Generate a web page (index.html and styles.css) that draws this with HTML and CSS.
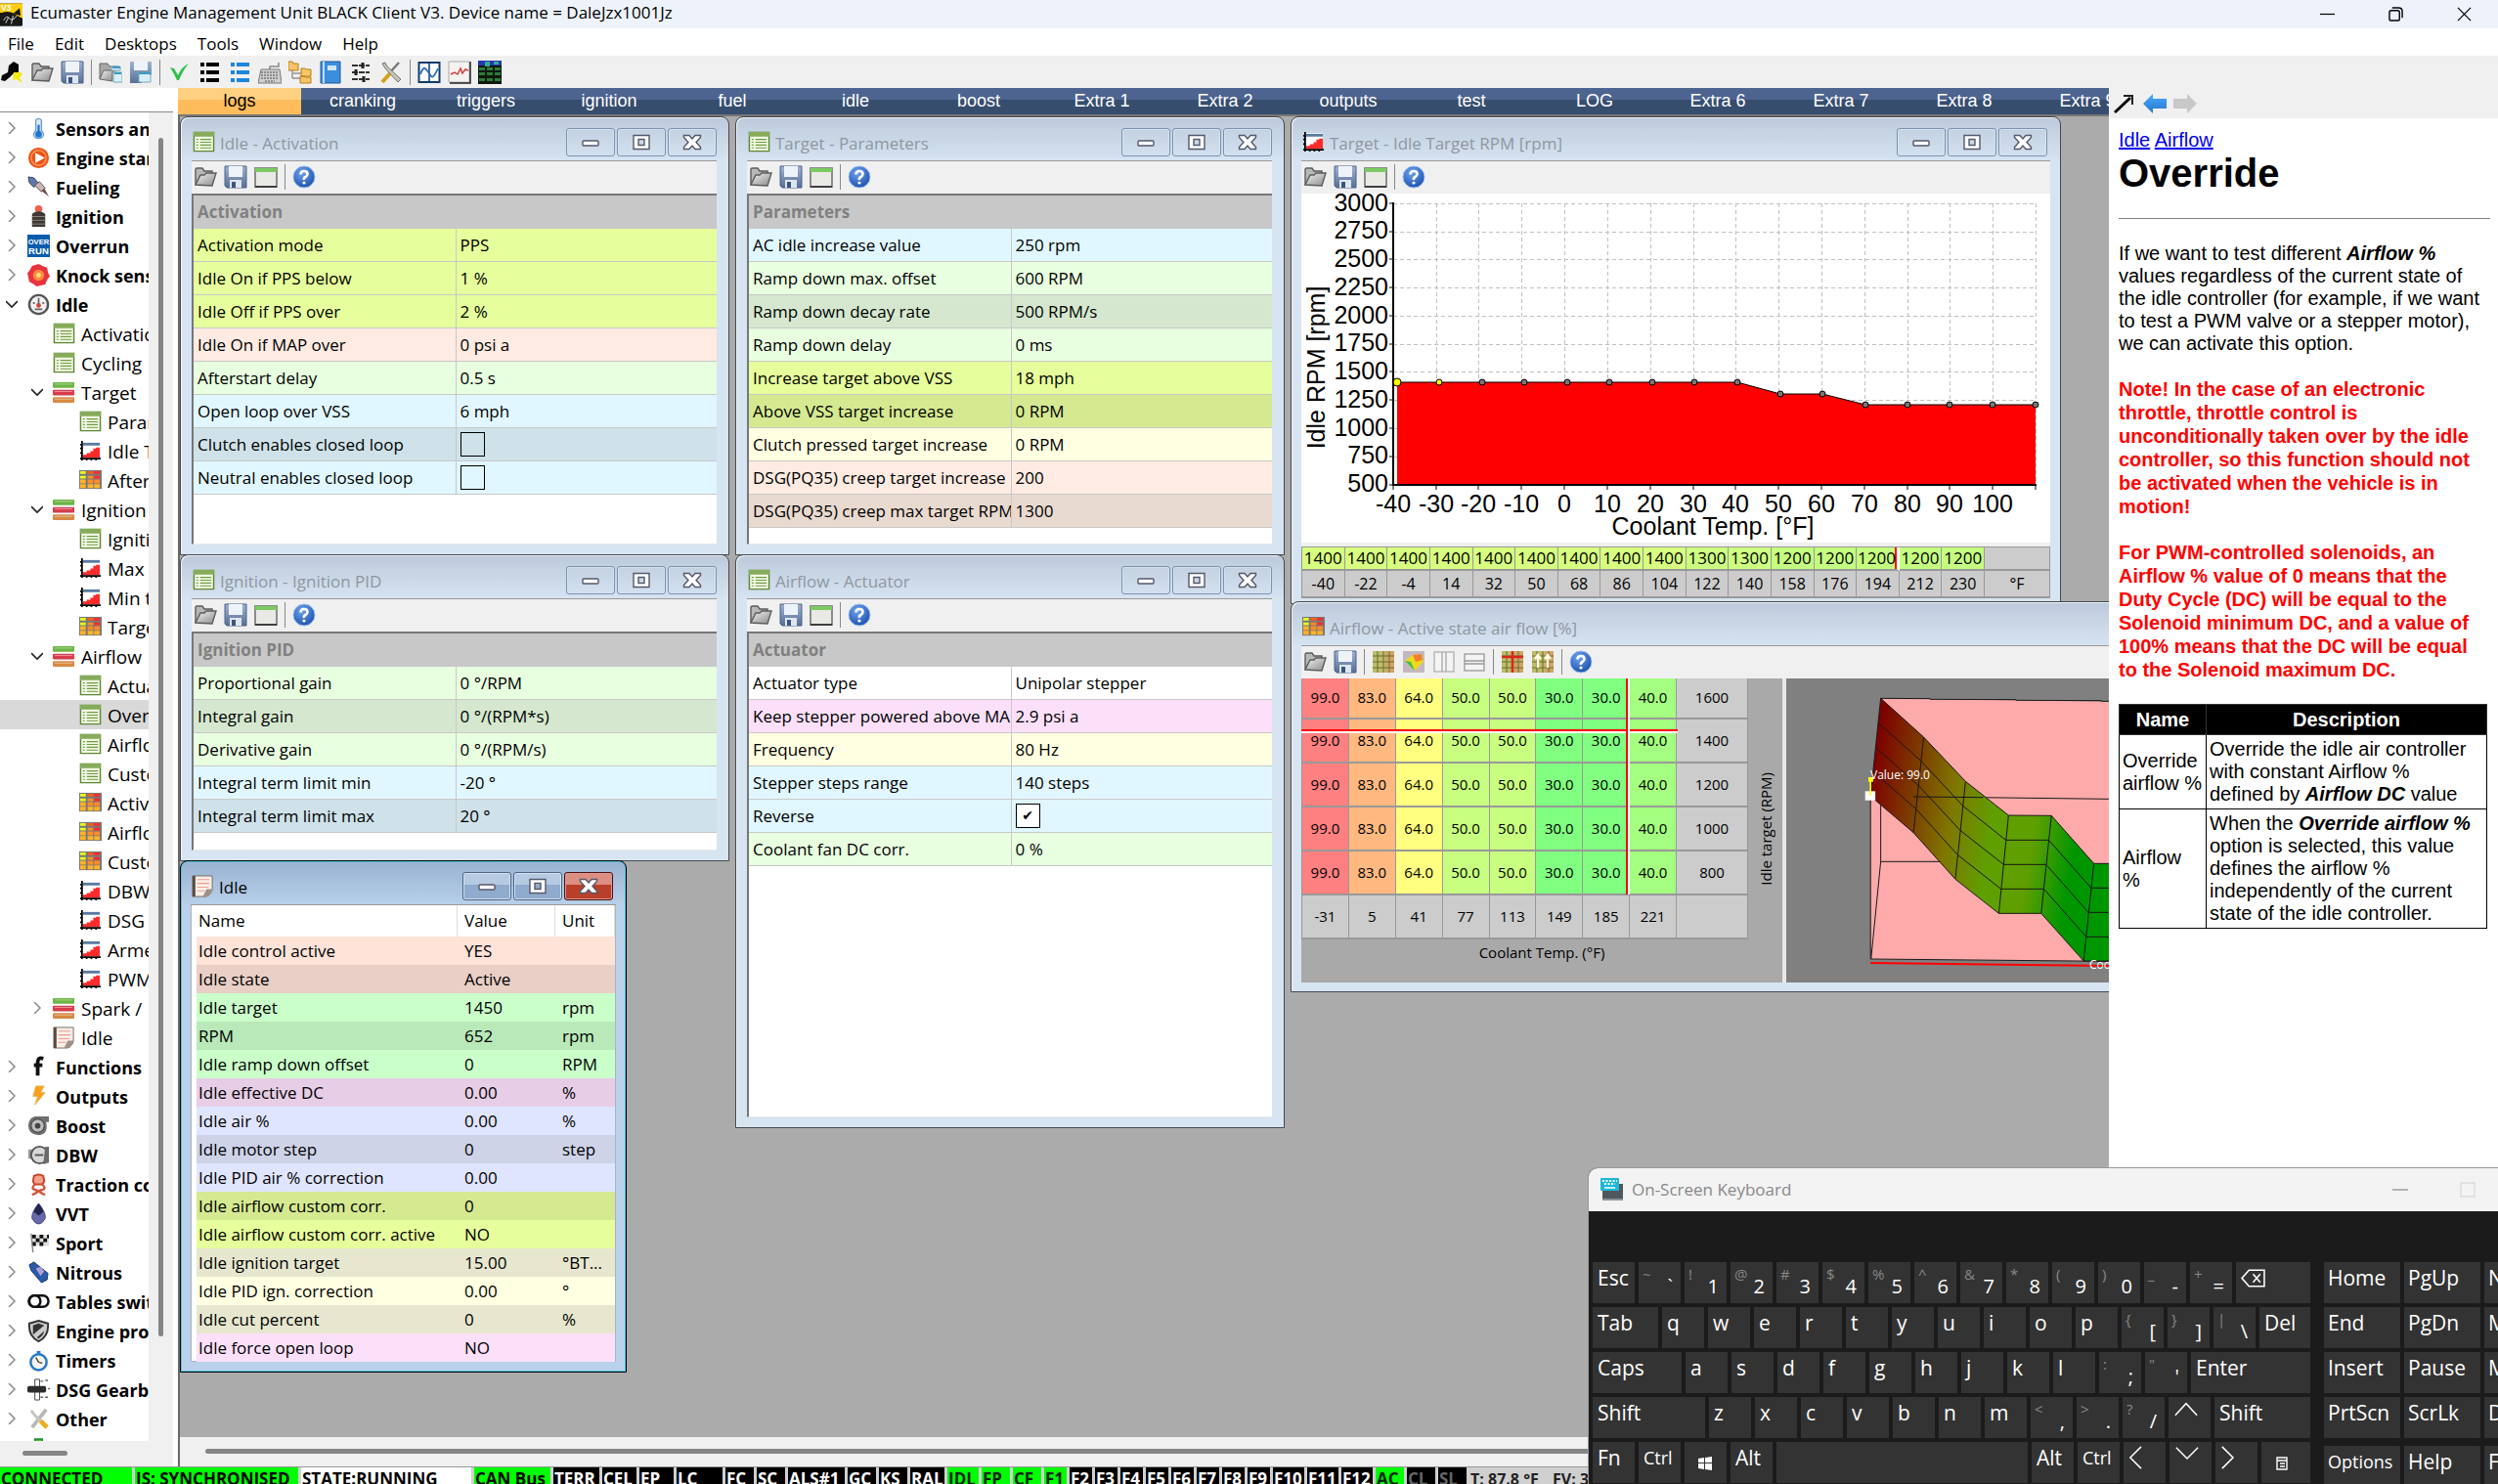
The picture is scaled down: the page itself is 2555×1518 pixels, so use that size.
FILE: index.html
```html
<!DOCTYPE html>
<html lang="en">
<head>
<meta charset="utf-8">
<title>Ecumaster Engine Management Unit BLACK Client V3</title>
<link rel="stylesheet" href="styles.css">
</head>
<body>
<svg class="defs" aria-hidden="true">
  <defs>
    <linearGradient id="g-metal" x1="0" y1="0" x2="1" y2="1"><stop offset="0" stop-color="#f4f4f4"/><stop offset="1" stop-color="#8a8a8a"/></linearGradient>
    <linearGradient id="g-save" x1="0" y1="0" x2="0" y2="1"><stop offset="0" stop-color="#9fb2d0"/><stop offset="1" stop-color="#586f98"/></linearGradient>
    <radialGradient id="g-help" cx=".4" cy=".3" r=".8"><stop offset="0" stop-color="#6fa4ee"/><stop offset="1" stop-color="#1448a8"/></radialGradient>
    <linearGradient id="g-surface" gradientUnits="userSpaceOnUse" x1="1110" y1="460" x2="1507" y2="500"><stop offset="0" stop-color="#7d0000"/><stop offset=".2" stop-color="#7c3a00"/><stop offset=".4" stop-color="#7f7700"/><stop offset=".6" stop-color="#5f9f00"/><stop offset=".8" stop-color="#5f9f00"/><stop offset="1" stop-color="#009600"/></linearGradient>
    <linearGradient id="g-back" x1="0" y1="0" x2="0" y2="1"><stop offset="0" stop-color="#4aa8ff"/><stop offset="1" stop-color="#2478cc"/></linearGradient>
  </defs>
  <symbol id="i-folder" viewBox="0 0 24 24"><path d="M2 20V4l1-1h6l2 3h8v4" fill="#b8b8b8" stroke="#5c5c5c" stroke-width="1.4"/><path d="M2 20L7 10h4l2-2h10l-4 13z" fill="url(#g-metal)" stroke="#5c5c5c" stroke-width="1.4"/></symbol>
  <symbol id="i-save" viewBox="0 0 24 24"><path d="M1 1h22v22H3l-2-2z" fill="url(#g-save)" stroke="#4d628a"/><path d="M5 1h14v11H5z" fill="#eef3fa"/><path d="M6 15h12v8H6z" fill="#dfe6ef"/><path d="M8 17h4v6H8z" fill="#3c5580"/></symbol>
  <symbol id="i-panel" viewBox="0 0 24 24"><path d="M1 3h22v19H1z" fill="#e9e9e6" stroke="#8c8c8c" stroke-width="2"/><path d="M1 3h22v4H1z" fill="#7ccb62"/><path d="M1 22h22" stroke="#3f3f3f" stroke-width="2"/></symbol>
  <symbol id="i-help" viewBox="0 0 24 24"><circle cx="12" cy="12" r="11" fill="url(#g-help)" stroke="#9bbdf0"/><path d="M8.500 9.500Q8.500 6 12 6t3.500 3q0 2-2 3t-1.500 3" fill="none" stroke="#fff" stroke-width="2.600"/><circle cx="12" cy="18" r="1.600" fill="#fff"/></symbol>
  <symbol id="i-list" viewBox="0 0 24 24"><path d="M1.500 1.500h21v20h-21z" fill="#f2f8e4" stroke="#5f8733" stroke-width="1.500"/><path d="M1 1h22v5H1z" fill="#86ab5a"/><path d="M4 9h2M4 12h2M4 15h2M4 18h2M8 9h12M8 12h12M8 15h12M8 18h12" stroke="#6f9c42" stroke-width="1.300"/></symbol>
  <symbol id="i-chart" viewBox="0 0 24 24"><path d="M4 2h18v18H4z" fill="#fff"/><path d="M4 3h18v3H4z" fill="#5a7aa0"/><path d="M4 19v-3h4v-2h4v-2h3V9h3V8h4v11z" fill="#ff2a2a"/><path d="M3 1v21M1 20h22M1 5h3M1 9h3M1 14h3M8 19v3M13 19v3M18 19v3" stroke="#000" stroke-width="1.800"/></symbol>
  <symbol id="i-table" viewBox="0 0 24 24"><path d="M0 1h24v20H0z" fill="#777"/><path d="M1 2h6v3H1zM1 7h6v3H1z" fill="#e8ff1e"/><path d="M9 2h6v3H9z" fill="#ff5a1e"/><path d="M16 2h6v3h-6zM16 7h6v3h-6z" fill="#ff2a2a"/><path d="M9 7h6v3H9zM9 11h6v4H9zM16 11h6v4h-6z" fill="#ff8c28"/><path d="M1 11h6v4H1zM1 16h6v4H1zM9 16h6v4H9zM16 16h6v4h-6z" fill="#ffb428"/></symbol>
  <symbol id="i-stack" viewBox="0 0 24 24"><rect y="1" width="23" height="6" rx="1" fill="#6cb544"/><rect y="9" width="23" height="6" rx="1" fill="#d63c4c"/><rect y="17" width="23" height="6" rx="1" fill="#d68a44"/><path d="M2 3h19M2 11h19M2 19h19" stroke="#fff" stroke-opacity=".45"/></symbol>
  <symbol id="i-doc" viewBox="0 0 24 24"><path d="M1 1h21v15l-6 7H1z" fill="#f6efe8" stroke="#776b62"/><path d="M1 1h3v22H1z" fill="#5c4a40"/><path d="M12 23l4-8 6 0v3l-4 5z" fill="#9d9187"/><path d="M6 5h13M6 9h13M6 13h12M6 17h8" stroke="#f09a90" stroke-width="1.200"/></symbol>
  <symbol id="i-thermo" viewBox="0 0 24 24"><path d="M9 3q3-3 6 0v11q4 4 1 7-4 3-8 0-3-3 1-7z" fill="#dcebf8" stroke="#6a9dcc" stroke-width="1.400"/><circle cx="12" cy="18" r="3.500" fill="#1f74d0"/><path d="M12 8v9" stroke="#1f74d0" stroke-width="2.400"/></symbol>
  <symbol id="i-play" viewBox="0 0 24 24"><circle cx="12" cy="12" r="11" fill="#ec5314"/><circle cx="12" cy="12" r="8" fill="none" stroke="#ff9a5c" stroke-width="1.500"/><path d="M8.500 6.500l10 5.500-10 5.500z" fill="#fff"/></symbol>
  <symbol id="i-injector" viewBox="0 0 24 24"><path d="M1 1l6 1 5 6-5 4-5-5z" fill="#5f7aa8" stroke="#32425e"/><path d="M8 10l5-4 6 7-4 4z" fill="#cbb6b6" stroke="#6c5656"/><path d="M15 16l3-3 5 9z" fill="#6e4a4a"/></symbol>
  <symbol id="i-spark" viewBox="0 0 24 24"><circle cx="12" cy="4" r="4" fill="#f0604c"/><path d="M5 9q7-5 14 0v14H5z" fill="#3d3833"/><path d="M5 12h14M5 16h14M5 20h14" stroke="#8c857c"/></symbol>
  <symbol id="i-overrun" viewBox="0 0 24 24"><path d="M0 0h24v24H0z" fill="#0a5cad"/><text x="12" y="10" text-anchor="middle" font-family="Liberation Sans" font-size="8" font-weight="700" fill="#fff">OVER</text><text x="12" y="21" text-anchor="middle" font-family="Liberation Sans" font-size="10" font-weight="700" fill="#fff">RUN</text></symbol>
  <symbol id="i-knock" viewBox="0 0 24 24"><path d="M12 0l4 2 5 2 1 5 2 4-3 4-2 5-5 1-4 1-4-3-4-2-1-5-1-4 3-4 2-4z" fill="#e8323c"/><circle cx="12" cy="12" r="6" fill="#ff8a3c"/><circle cx="12" cy="12" r="2.500" fill="#ffe08a"/></symbol>
  <symbol id="i-gauge" viewBox="0 0 24 24"><circle cx="12" cy="12" r="10" fill="#f2f2f2" stroke="#555" stroke-width="2.500"/><path d="M12 5v8M8 17h8M6 10l2 1M18 10l-2 1" stroke="#666" stroke-width="1.800"/><circle cx="12" cy="13" r="2.500" fill="#c44"/></symbol>
  <symbol id="i-func" viewBox="0 0 24 24"><path d="M17 3q-6-2-6 4v14M7 10h9" fill="none" stroke="#111" stroke-width="4"/></symbol>
  <symbol id="i-bolt" viewBox="0 0 24 24"><path d="M9 1h9l-4 7h5L8 21l3-9H6z" fill="#f8a01c" stroke="#e8b860"/></symbol>
  <symbol id="i-turbo" viewBox="0 0 24 24"><path d="M8 2h15v6h-3q3 14-9 14Q1 21 1 12 1 4 8 2z" fill="#6f6f6f"/><circle cx="11" cy="12" r="7" fill="#bdbdbd" stroke="#333"/><circle cx="11" cy="12" r="3" fill="#444"/></symbol>
  <symbol id="i-dbw" viewBox="0 0 24 24"><path d="M1 6h4v10H1z" fill="#9a9a9a"/><circle cx="13" cy="12" r="9" fill="#d8d8d8" stroke="#555" stroke-width="2"/><path d="M19 3h4v17l-6 2z" fill="#6a6a6a"/><path d="M8 12h9" stroke="#555" stroke-width="2"/></symbol>
  <symbol id="i-traction" viewBox="0 0 24 24"><path d="M6 9l1-6q5-3 10 0l1 6-2 3H8z" fill="#f5a088" stroke="#c8442a" stroke-width="2"/><path d="M8 12q-5 5 1 6t-4 5M16 12q5 5-1 6t4 5" fill="none" stroke="#d4533a" stroke-width="2.500"/></symbol>
  <symbol id="i-drop" viewBox="0 0 24 24"><path d="M12 1q8 10 7 16-3 6-7 6t-7-6q-1-6 7-16z" fill="#6668a8" stroke="#44467c"/><path d="M12 1q4 5 5 9l-5 4-5-4q1-4 5-9z" fill="#22244a"/></symbol>
  <symbol id="i-flag" viewBox="0 0 24 24"><path d="M5 3h18v12H5z" fill="#ddd"/><path d="M5 3h4v4H5zM13 3h4v4h-4zM9 7h4v4H9zM17 7h4v4h-4zM5 11h4v4H5zM13 11h4v4h-4zM21 3h2v4h-2z" fill="#111"/><path d="M4 2l2 20" stroke="#888" stroke-width="1.500"/></symbol>
  <symbol id="i-nitrous" viewBox="0 0 24 24"><path d="M2 4l5-3 15 12-1 7-6 3L4 10z" fill="#2a5aa8" stroke="#163a70"/><path d="M9 8l5-2 4 5-4 5z" fill="#b0a0d8"/></symbol>
  <symbol id="i-switch" viewBox="0 0 24 24"><rect x="1.500" y="5.500" width="21" height="12" rx="6" fill="#fff" stroke="#111" stroke-width="2.600"/><circle cx="8" cy="11.500" r="6" fill="#fff" stroke="#111" stroke-width="2.600"/></symbol>
  <symbol id="i-shield" viewBox="0 0 24 24"><path d="M12 1l10 3q1 14-10 19Q1 18 2 4z" fill="#ccc" stroke="#333" stroke-width="2"/><path d="M6 6l6-2 6 2-12 10zM10 19l8-7q-1 5-6 8z" fill="#333"/></symbol>
  <symbol id="i-timer" viewBox="0 0 24 24"><circle cx="12" cy="14" r="8.500" fill="#f6f6ee" stroke="#2878c8" stroke-width="2.600"/><path d="M10 2h4v3h-4z" fill="#2878c8"/><path d="M12 14l-3-5M12 14l4 1" stroke="#444" stroke-width="1.500"/></symbol>
  <symbol id="i-gear" viewBox="0 0 24 24"><path d="M8 1h5v22H8z" fill="#fff" stroke="#444"/><rect y="8" width="20" height="7" rx="2" fill="#2c2c2c"/><path d="M14 3h3M14 20h3M19 2h3M19 20h3M22 11h2" stroke="#666" stroke-width="1.500"/></symbol>
  <symbol id="i-tools" viewBox="0 0 24 24"><path d="M20 2l-9 10" stroke="#777" stroke-width="2.400"/><path d="M11 13l-8 9" stroke="#d8a018" stroke-width="4"/><path d="M3 3l3 5 13 14 3-3L8 6 6 2z" fill="#c4c4bc" stroke="#77776e"/></symbol>
  <symbol id="i-other" viewBox="0 0 24 24"><path d="M20 2L5 21" stroke="#b8b8b4" stroke-width="4"/><path d="M4 3l4 5 6 6" stroke="#c4c4c0" stroke-width="3" fill="none"/><path d="M14 14l7 7" stroke="#f0ac1c" stroke-width="5"/></symbol>
  <symbol id="i-plus" viewBox="0 0 24 24"><path d="M8 2h8v6h6v8h-6v6H8v-6H2V8h6z" fill="#5cb832" stroke="#1a8a3c" stroke-width="1.500"/></symbol>
  <symbol id="i-plug" viewBox="0 0 24 24"><path d="M14 1l5 3 0 8-5 1-4 4-5 4-4-1 1-5 6-3 1-7z" fill="#080808"/><path d="M14 12h8v4l-2 1 3 6-6-4-4 1z" fill="#f4ea10"/></symbol>
  <symbol id="i-loadproj" viewBox="0 0 24 24"><path d="M1 19V3h8l2 3h9v4" fill="#a8a8a8" stroke="#666"/><path d="M1 19l4-9h9v11z" fill="url(#g-metal)" stroke="#666"/><path d="M13 6h9v4h-9zM15 12h9v10h-9z" fill="#d8eef8" stroke="#7ab"/><path d="M14 7h8M16 13h7" stroke="#3a9ac8" stroke-width="2"/></symbol>
  <symbol id="i-saveproj" viewBox="0 0 24 24"><path d="M1 1h22v14H13v8H1z" fill="url(#g-save)"/><path d="M5 1h14v9H5z" fill="#eef3fa"/><path d="M10 12h12v10H10z" fill="#d8eef8" stroke="#7ab"/><path d="M10 13h12" stroke="#3a9ac8" stroke-width="2"/></symbol>
  <symbol id="i-check" viewBox="0 0 24 24"><path d="M3 7l4 1 4 7q4-9 11-12-6 7-10 17H10Q7 13 3 7z" fill="#2fc04a"/></symbol>
  <symbol id="i-bullets" viewBox="0 0 24 24"><g stroke="currentColor" stroke-width="4"><path d="M3 4h4M9 4h13M3 12h4M9 12h13M3 20h4M9 20h13"/></g></symbol>
  <symbol id="i-keys" viewBox="0 0 24 24"><path d="M12 9V6h9V2" fill="none" stroke="#888" stroke-width="1.500"/><path d="M3 9h19l2 14H0z" fill="#d0d0d0" stroke="#777"/><path d="M3 12h18M3 15h18M3 18h18M7 21h10" stroke="#777" stroke-width="1.600" stroke-dasharray="2 1"/></symbol>
  <symbol id="i-tree" viewBox="0 0 24 24"><path d="M4 9v9h9M5 13h8" stroke="#666" fill="none"/><path d="M0 1h4l1 2h5v7H0zM13 8h4l1 1h5v7H13zM12 16h4l1 1h6v6H12z" fill="#f8c468" stroke="#b87c1c"/></symbol>
  <symbol id="i-book" viewBox="0 0 24 24"><path d="M2 1h20v22H2z" fill="#3c8edc" stroke="#1c5a9c"/><path d="M5 1v22" stroke="#bcdcf8" stroke-width="2"/><path d="M9 5h9v5H9z" fill="#cfe6fb"/></symbol>
  <symbol id="i-sliders" viewBox="0 0 24 24"><path d="M3 5h18M3 12h18M3 19h18" stroke="#333" stroke-width="2" stroke-dasharray="6 1"/><path d="M14 2v6M7 9v6M15 16v6" stroke="#222" stroke-width="3"/></symbol>
  <symbol id="i-scope" viewBox="0 0 24 24"><path d="M1.500 2h21v20h-21z" fill="#fff" stroke="#123a6c" stroke-width="2"/><path d="M12 2v20" stroke="#123a6c" stroke-width="1.500"/><path d="M3 14q3-9 6-5t5 7 7-8" fill="none" stroke="#2a6cc0" stroke-width="1.800"/></symbol>
  <symbol id="i-log" viewBox="0 0 24 24"><path d="M1 1h21v21H1z" fill="#f6f2f2" stroke="#aaa"/><path d="M23 1v22H2" stroke="#222" stroke-width="1.500" fill="none"/><path d="M3 14l4-2 3 2 3-6 2 5 3-4 3 1" stroke="#d83c3c" stroke-width="1.500" fill="none"/></symbol>
  <symbol id="i-matrix" viewBox="0 0 24 24"><path d="M0 0h24v24H0z" fill="#101810"/><path d="M0 0h24v5H0z" fill="#2438b0"/><path d="M7 1h5v5H7zM16 1h5v3h-5z" fill="#30b090"/><path d="M1 7h6v3H1zM9 7h6v3H9zM17 7h6v3h-6zM1 12h6v3H1zM9 12h6v3H9zM17 12h6v3h-6zM1 18h6v3H1zM9 18h6v3H9zM17 18h6v3h-6z" fill="#2c7c38"/></symbol>
  <symbol id="i-map" viewBox="0 0 24 24"><path d="M1 1h22v22H1z" fill="#bcbc6c"/><path d="M14 1h9v22h-9z" fill="#cfa468"/><path d="M1 6h22M1 12h22M1 18h22M6 1v22M12 1v22M18 1v22" stroke="#6c6c2c"/></symbol>
  <symbol id="i-mapcross" viewBox="0 0 24 24"><use href="#i-map"/><path d="M1 7h22M12 1v22" stroke="#d8281c" stroke-width="2.600"/></symbol>
  <symbol id="i-maparrows" viewBox="0 0 24 24"><use href="#i-map"/><path d="M7 18V6M4 9l3-4 3 4M17 18V6M14 9l3-4 3 4" stroke="#fffbe0" stroke-width="2.400" fill="none"/></symbol>
  <symbol id="i-surface" viewBox="0 0 24 24"><path d="M1 1h22v22H1z" fill="#c4b8c0"/><path d="M3 11l8-6 9-1 2 8-9 9z" fill="#f0d81c"/><path d="M11 5l9-1 1 6-7 2z" fill="#f0802c"/><path d="M3 11l6 1 4 9z" fill="#38c048"/></symbol>
  <symbol id="i-cols" viewBox="0 0 24 24"><path d="M2 2h20v20H2z" fill="#f4f4f4" stroke="#b8b8b8" stroke-width="1.500"/><path d="M10 2v20M14 2v20" stroke="#b0b0b0" stroke-width="1.500"/></symbol>
  <symbol id="i-rows" viewBox="0 0 24 24"><path d="M2 4h20v17H2z" fill="#f4f4f4" stroke="#a4a4a4" stroke-width="1.500"/><path d="M2 11h20M2 14h20" stroke="#999" stroke-width="1.500"/></symbol>
  <symbol id="i-min" viewBox="0 0 24 24"><rect x="4" y="10" width="16" height="5" rx="1" fill="#fff" stroke="#55586a" stroke-width="1.400"/></symbol>
  <symbol id="i-max" viewBox="0 0 24 24"><path fill-rule="evenodd" d="M4 4.500h16v14H4zM9 8.500v6h6v-6z" fill="#fff" stroke="#55586a" stroke-width="1.400"/></symbol>
  <symbol id="i-close" viewBox="0 0 24 24"><path d="M3.500 4.500h5.500l3 3.500 3-3.500h5.500v2L16 11.500l4.500 5v2H15l-3-3.500-3 3.500H3.500v-2l4.500-5-4.500-5z" fill="#fff" stroke="#55586a" stroke-width="1.400"/></symbol>
  <symbol id="i-right" viewBox="0 0 12 12"><path d="M3 0l6 6-6 6" fill="none" stroke="#8c8c8c" stroke-width="1.500"/></symbol>
  <symbol id="i-down" viewBox="0 0 12 12"><path d="M0 3l6 6 6-6" fill="none" stroke="#222" stroke-width="1.600"/></symbol>
</svg>

<header class="titlebar">
  <svg class="app-icon" viewBox="0 0 24 24" aria-hidden="true"><path d="M0 0h24v24H0z" fill="#111"/><path d="M0 0h24v16L12 10H0z" fill="#ffcc10"/><path d="M0 11q12-6 22 6v7H0z" fill="#181818"/><path d="M14 11l7-6 1 8z" fill="#181818"/><path d="M4 18q3-6 6-2t8-3M6 21l3-6M12 22l2-9" stroke="#ddd" fill="none"/><text x="1" y="8" font-family="Liberation Sans" font-size="9" font-weight="700" fill="#fff">V3</text></svg>
  <h1 class="app-title">Ecumaster Engine Management Unit BLACK Client V3. Device name = DaleJzx1001Jz</h1>
  <div class="sys-buttons">
    <button aria-label="Minimize"><svg viewBox="0 0 16 16"><path d="M0 8h16" stroke="#000" stroke-width="1.300"/></svg></button>
    <button aria-label="Restore"><svg viewBox="0 0 16 16" fill="none" stroke="#000" stroke-width="1.500"><rect x="1" y="4" width="11" height="11" rx="2"/><path d="M4 1h7q4 0 4 4v7"/></svg></button>
    <button aria-label="Close"><svg viewBox="0 0 16 16"><path d="M1 1l14 14M15 1L1 15" stroke="#000" stroke-width="1.300"/></svg></button>
  </div>
</header>
<nav class="menu"><button>File</button><button>Edit</button><button>Desktops</button><button>Tools</button><button>Window</button><button>Help</button></nav>
<div class="toolbar main-tools">
  <button aria-label="Connect"><svg><use href="#i-plug"/></svg></button>
  <button aria-label="Open"><svg><use href="#i-folder"/></svg></button>
  <button aria-label="Save"><svg><use href="#i-save"/></svg></button>
  <span class="sep"></span>
  <button aria-label="Open project"><svg><use href="#i-loadproj"/></svg></button>
  <button aria-label="Save project"><svg><use href="#i-saveproj"/></svg></button>
  <span class="sep"></span>
  <button aria-label="Make permanent"><svg><use href="#i-check"/></svg></button>
  <button aria-label="List"><svg><use href="#i-bullets"/></svg></button>
  <button aria-label="Channels" class="blue"><svg><use href="#i-bullets"/></svg></button>
  <button aria-label="Shortcuts"><svg><use href="#i-keys"/></svg></button>
  <button aria-label="Tree"><svg><use href="#i-tree"/></svg></button>
  <button aria-label="Manual"><svg><use href="#i-book"/></svg></button>
  <button aria-label="Options"><svg><use href="#i-sliders"/></svg></button>
  <button aria-label="Tools"><svg><use href="#i-tools"/></svg></button>
  <span class="sep"></span>
  <button aria-label="Scope"><svg><use href="#i-scope"/></svg></button>
  <button aria-label="Log"><svg><use href="#i-log"/></svg></button>
  <button aria-label="Parameters"><svg><use href="#i-matrix"/></svg></button>
</div>

<main class="workspace">
  <aside class="sidebar">
    <input class="search" type="text" aria-label="Filter">
    <div class="tree-area">
      <ul class="tree">
        <li class="top"><svg class="chev"><use href="#i-right"/></svg><svg><use href="#i-thermo"/></svg><span>Sensors and</span></li>
        <li class="top"><svg class="chev"><use href="#i-right"/></svg><svg><use href="#i-play"/></svg><span>Engine start</span></li>
        <li class="top"><svg class="chev"><use href="#i-right"/></svg><svg><use href="#i-injector"/></svg><span>Fueling</span></li>
        <li class="top"><svg class="chev"><use href="#i-right"/></svg><svg><use href="#i-spark"/></svg><span>Ignition</span></li>
        <li class="top"><svg class="chev"><use href="#i-right"/></svg><svg><use href="#i-overrun"/></svg><span>Overrun</span></li>
        <li class="top"><svg class="chev"><use href="#i-right"/></svg><svg><use href="#i-knock"/></svg><span>Knock sensor</span></li>
        <li class="top"><svg class="chev"><use href="#i-down"/></svg><svg><use href="#i-gauge"/></svg><span>Idle</span></li>
        <li class="leaf1"><svg><use href="#i-list"/></svg><span>Activation</span></li>
        <li class="leaf1"><svg><use href="#i-list"/></svg><span>Cycling</span></li>
        <li class="group"><svg class="chev"><use href="#i-down"/></svg><svg><use href="#i-stack"/></svg><span>Target</span></li>
        <li class="leaf2"><svg><use href="#i-list"/></svg><span>Parameters</span></li>
        <li class="leaf2"><svg><use href="#i-chart"/></svg><span>Idle Target</span></li>
        <li class="leaf2"><svg><use href="#i-table"/></svg><span>Afterstart</span></li>
        <li class="group"><svg class="chev"><use href="#i-down"/></svg><svg><use href="#i-stack"/></svg><span>Ignition</span></li>
        <li class="leaf2"><svg><use href="#i-list"/></svg><span>Ignition PID</span></li>
        <li class="leaf2"><svg><use href="#i-chart"/></svg><span>Max ign</span></li>
        <li class="leaf2"><svg><use href="#i-chart"/></svg><span>Min table</span></li>
        <li class="leaf2"><svg><use href="#i-table"/></svg><span>Target ign</span></li>
        <li class="group"><svg class="chev"><use href="#i-down"/></svg><svg><use href="#i-stack"/></svg><span>Airflow</span></li>
        <li class="leaf2"><svg><use href="#i-list"/></svg><span>Actuator</span></li>
        <li class="leaf2 selected"><svg><use href="#i-list"/></svg><span>Override</span></li>
        <li class="leaf2"><svg><use href="#i-list"/></svg><span>Airflow PID</span></li>
        <li class="leaf2"><svg><use href="#i-list"/></svg><span>Custom</span></li>
        <li class="leaf2"><svg><use href="#i-table"/></svg><span>Active state</span></li>
        <li class="leaf2"><svg><use href="#i-table"/></svg><span>Airflow</span></li>
        <li class="leaf2"><svg><use href="#i-table"/></svg><span>Custom</span></li>
        <li class="leaf2"><svg><use href="#i-chart"/></svg><span>DBW</span></li>
        <li class="leaf2"><svg><use href="#i-chart"/></svg><span>DSG</span></li>
        <li class="leaf2"><svg><use href="#i-chart"/></svg><span>Armed</span></li>
        <li class="leaf2"><svg><use href="#i-chart"/></svg><span>PWM</span></li>
        <li class="group"><svg class="chev"><use href="#i-right"/></svg><svg><use href="#i-stack"/></svg><span>Spark /</span></li>
        <li class="leaf1"><svg><use href="#i-doc"/></svg><span>Idle</span></li>
        <li class="top"><svg class="chev"><use href="#i-right"/></svg><svg><use href="#i-func"/></svg><span>Functions</span></li>
        <li class="top"><svg class="chev"><use href="#i-right"/></svg><svg><use href="#i-bolt"/></svg><span>Outputs</span></li>
        <li class="top"><svg class="chev"><use href="#i-right"/></svg><svg><use href="#i-turbo"/></svg><span>Boost</span></li>
        <li class="top"><svg class="chev"><use href="#i-right"/></svg><svg><use href="#i-dbw"/></svg><span>DBW</span></li>
        <li class="top"><svg class="chev"><use href="#i-right"/></svg><svg><use href="#i-traction"/></svg><span>Traction control</span></li>
        <li class="top"><svg class="chev"><use href="#i-right"/></svg><svg><use href="#i-drop"/></svg><span>VVT</span></li>
        <li class="top"><svg class="chev"><use href="#i-right"/></svg><svg><use href="#i-flag"/></svg><span>Sport</span></li>
        <li class="top"><svg class="chev"><use href="#i-right"/></svg><svg><use href="#i-nitrous"/></svg><span>Nitrous</span></li>
        <li class="top"><svg class="chev"><use href="#i-right"/></svg><svg><use href="#i-switch"/></svg><span>Tables switch</span></li>
        <li class="top"><svg class="chev"><use href="#i-right"/></svg><svg><use href="#i-shield"/></svg><span>Engine protection</span></li>
        <li class="top"><svg class="chev"><use href="#i-right"/></svg><svg><use href="#i-timer"/></svg><span>Timers</span></li>
        <li class="top"><svg class="chev"><use href="#i-right"/></svg><svg><use href="#i-gear"/></svg><span>DSG Gearbox</span></li>
        <li class="top"><svg class="chev"><use href="#i-right"/></svg><svg><use href="#i-other"/></svg><span>Other</span></li>
        <li class="top"><svg class="chev"></svg><svg><use href="#i-plus"/></svg><span></span></li>
      </ul>
      <div class="vscroll"><i></i></div>
    </div>
    <div class="hscroll"><i></i></div>
  </aside>

  <section class="mdi">
    <nav class="tabs"><button class="active">logs</button><button>cranking</button><button>triggers</button><button>ignition</button><button>fuel</button><button>idle</button><button>boost</button><button>Extra 1</button><button>Extra 2</button><button>outputs</button><button>test</button><button>LOG</button><button>Extra 6</button><button>Extra 7</button><button>Extra 8</button><button>Extra 9</button></nav>
    <div class="canvas">

      <article class="win w-activation">
        <header><svg><use href="#i-list"/></svg><h2>Idle - Activation</h2><div class="caption"><button aria-label="Minimize"><svg><use href="#i-min"/></svg></button><button aria-label="Maximize"><svg><use href="#i-max"/></svg></button><button aria-label="Close"><svg><use href="#i-close"/></svg></button></div></header>
        <div class="toolbar"><button aria-label="Open"><svg><use href="#i-folder"/></svg></button><button aria-label="Save"><svg><use href="#i-save"/></svg></button><button aria-label="Panel"><svg><use href="#i-panel"/></svg></button><span class="sep"></span><button aria-label="Help"><svg><use href="#i-help"/></svg></button></div>
        <div class="sheet"><table class="params">
          <tr><th colspan="2">Activation</th></tr>
          <tr class="lime"><td>Activation mode</td><td>PPS</td></tr>
          <tr class="lime"><td>Idle On if PPS below</td><td>1 %</td></tr>
          <tr class="lime"><td>Idle Off if PPS over</td><td>2 %</td></tr>
          <tr class="peach"><td>Idle On if MAP over</td><td>0 psi a</td></tr>
          <tr class="mint"><td>Afterstart delay</td><td>0.5 s</td></tr>
          <tr class="sky"><td>Open loop over VSS</td><td>6 mph</td></tr>
          <tr class="sky-d"><td><label for="clutch">Clutch enables closed loop</label></td><td><input id="clutch" type="checkbox"></td></tr>
          <tr class="sky"><td><label for="neutral">Neutral enables closed loop</label></td><td><input id="neutral" type="checkbox"></td></tr>
        </table></div>
      </article>

      <article class="win w-params">
        <header><svg><use href="#i-list"/></svg><h2>Target - Parameters</h2><div class="caption"><button aria-label="Minimize"><svg><use href="#i-min"/></svg></button><button aria-label="Maximize"><svg><use href="#i-max"/></svg></button><button aria-label="Close"><svg><use href="#i-close"/></svg></button></div></header>
        <div class="toolbar"><button aria-label="Open"><svg><use href="#i-folder"/></svg></button><button aria-label="Save"><svg><use href="#i-save"/></svg></button><button aria-label="Panel"><svg><use href="#i-panel"/></svg></button><span class="sep"></span><button aria-label="Help"><svg><use href="#i-help"/></svg></button></div>
        <div class="sheet"><table class="params">
          <tr><th colspan="2">Parameters</th></tr>
          <tr class="sky"><td>AC idle increase value</td><td>250 rpm</td></tr>
          <tr class="mint"><td>Ramp down max. offset</td><td>600 RPM</td></tr>
          <tr class="mint-d"><td>Ramp down decay rate</td><td>500 RPM/s</td></tr>
          <tr class="mint"><td>Ramp down delay</td><td>0 ms</td></tr>
          <tr class="lime"><td>Increase target above VSS</td><td>18 mph</td></tr>
          <tr class="lime-d"><td>Above VSS target increase</td><td>0 RPM</td></tr>
          <tr class="cream"><td>Clutch pressed target increase</td><td>0 RPM</td></tr>
          <tr class="peach"><td>DSG(PQ35) creep target increase</td><td>200</td></tr>
          <tr class="peach-d"><td>DSG(PQ35) creep max target RPM</td><td>1300</td></tr>
        </table></div>
      </article>

      <article class="win w-rpm">
        <header><svg><use href="#i-chart"/></svg><h2>Target - Idle Target RPM [rpm]</h2><div class="caption"><button aria-label="Minimize"><svg><use href="#i-min"/></svg></button><button aria-label="Maximize"><svg><use href="#i-max"/></svg></button><button aria-label="Close"><svg><use href="#i-close"/></svg></button></div></header>
        <div class="toolbar"><button aria-label="Open"><svg><use href="#i-folder"/></svg></button><button aria-label="Save"><svg><use href="#i-save"/></svg></button><button aria-label="Panel"><svg><use href="#i-panel"/></svg></button><span class="sep"></span><button aria-label="Help"><svg><use href="#i-help"/></svg></button></div>
        <svg class="chart" viewBox="0 0 766 357">
          <path class="grid" d="M94 10.500H751M94 39.500H751M94 67.500H751M94 96.500H751M94 125.500H751M94 154.500H751M94 182.500H751M94 211.500H751M94 240.500H751M94 269.500H751M138.500 10V298M181.500 10V298M225.500 10V298M269.500 10V298M313.500 10V298M357.500 10V298M401.500 10V298M444.500 10V298M488.500 10V298M532.500 10V298M576.500 10V298M620.500 10V298M663.500 10V298M707.500 10V298M751.500 10V298"/>
          <path class="area" d="M98 298V193H446L490 205H533L577 216H751V298z"/>
          <path class="curve" d="M98 193H446L490 205H533L577 216H751"/>
          <path class="axis" d="M94 9V298H752"/>
          <path class="tick" d="M90 10h4M90 39h4M90 67h4M90 96h4M90 125h4M90 154h4M90 182h4M90 211h4M90 240h4M90 269h4M90 298h4M94 298v5M138 298v5M181 298v5M225 298v5M269 298v5M313 298v5M357 298v5M401 298v5M444 298v5M488 298v5M532 298v5M576 298v5M620 298v5M663 298v5M707 298v5M751 298v5"/>
          <g class="dots"><circle class="hot" cx="98" cy="193" r="4"/><circle class="hot" cx="141" cy="193" r="3"/><circle cx="185" cy="193" r="3"/><circle cx="228" cy="193" r="3"/><circle cx="272" cy="193" r="3"/><circle cx="315" cy="193" r="3"/><circle cx="359" cy="193" r="3"/><circle cx="402" cy="193" r="3"/><circle cx="446" cy="193" r="3"/><circle cx="490" cy="205" r="3"/><circle cx="533" cy="205" r="3"/><circle cx="577" cy="216" r="3"/><circle cx="620" cy="216" r="3"/><circle cx="663" cy="216" r="3"/><circle cx="707" cy="216" r="3"/><circle cx="751" cy="216" r="3"/></g>
          <g class="ylab"><text x="89" y="18">3000</text><text x="89" y="46">2750</text><text x="89" y="75">2500</text><text x="89" y="104">2250</text><text x="89" y="133">2000</text><text x="89" y="161">1750</text><text x="89" y="190">1500</text><text x="89" y="219">1250</text><text x="89" y="248">1000</text><text x="89" y="276">750</text><text x="89" y="305">500</text></g>
          <g class="xlab"><text x="94" y="326">-40</text><text x="138" y="326">-30</text><text x="181" y="326">-20</text><text x="225" y="326">-10</text><text x="269" y="326">0</text><text x="313" y="326">10</text><text x="357" y="326">20</text><text x="401" y="326">30</text><text x="444" y="326">40</text><text x="488" y="326">50</text><text x="532" y="326">60</text><text x="576" y="326">70</text><text x="620" y="326">80</text><text x="663" y="326">90</text><text x="707" y="326">100</text><text x="421" y="349">Coolant Temp. [°F]</text><text transform="translate(24 178) rotate(-90)">Idle RPM [rpm]</text></g>
        </svg>
        <div class="rpm-strip">
          <table>
            <tr class="vals"><td class="a">1400</td><td class="a">1400</td><td class="a">1400</td><td class="a">1400</td><td class="a">1400</td><td class="a">1400</td><td class="a">1400</td><td class="a">1400</td><td class="a">1400</td><td class="b">1300</td><td class="b">1300</td><td class="c">1200</td><td class="c">1200</td><td class="c mark">1200</td><td class="c">1200</td><td class="c">1200</td><td class="unit"></td></tr>
            <tr class="bins"><td>-40</td><td>-22</td><td>-4</td><td>14</td><td>32</td><td>50</td><td>68</td><td>86</td><td>104</td><td>122</td><td>140</td><td>158</td><td>176</td><td>194</td><td>212</td><td>230</td><td>°F</td></tr>
          </table>
        </div>
      </article>

      <article class="win w-pid">
        <header><svg><use href="#i-list"/></svg><h2>Ignition - Ignition PID</h2><div class="caption"><button aria-label="Minimize"><svg><use href="#i-min"/></svg></button><button aria-label="Maximize"><svg><use href="#i-max"/></svg></button><button aria-label="Close"><svg><use href="#i-close"/></svg></button></div></header>
        <div class="toolbar"><button aria-label="Open"><svg><use href="#i-folder"/></svg></button><button aria-label="Save"><svg><use href="#i-save"/></svg></button><button aria-label="Panel"><svg><use href="#i-panel"/></svg></button><span class="sep"></span><button aria-label="Help"><svg><use href="#i-help"/></svg></button></div>
        <div class="sheet"><table class="params">
          <tr><th colspan="2">Ignition PID</th></tr>
          <tr class="mint"><td>Proportional gain</td><td>0 °/RPM</td></tr>
          <tr class="mint-d"><td>Integral gain</td><td>0 °/(RPM*s)</td></tr>
          <tr class="mint"><td>Derivative gain</td><td>0 °/(RPM/s)</td></tr>
          <tr class="sky"><td>Integral term limit min</td><td>-20 °</td></tr>
          <tr class="sky-d"><td>Integral term limit max</td><td>20 °</td></tr>
        </table></div>
      </article>

      <article class="win w-actuator">
        <header><svg><use href="#i-list"/></svg><h2>Airflow - Actuator</h2><div class="caption"><button aria-label="Minimize"><svg><use href="#i-min"/></svg></button><button aria-label="Maximize"><svg><use href="#i-max"/></svg></button><button aria-label="Close"><svg><use href="#i-close"/></svg></button></div></header>
        <div class="toolbar"><button aria-label="Open"><svg><use href="#i-folder"/></svg></button><button aria-label="Save"><svg><use href="#i-save"/></svg></button><button aria-label="Panel"><svg><use href="#i-panel"/></svg></button><span class="sep"></span><button aria-label="Help"><svg><use href="#i-help"/></svg></button></div>
        <div class="sheet"><table class="params">
          <tr><th colspan="2">Actuator</th></tr>
          <tr><td>Actuator type</td><td>Unipolar stepper</td></tr>
          <tr class="pink"><td>Keep stepper powered above MAP</td><td>2.9 psi a</td></tr>
          <tr class="cream"><td>Frequency</td><td>80 Hz</td></tr>
          <tr class="sky"><td>Stepper steps range</td><td>140 steps</td></tr>
          <tr class="sky"><td><label for="reverse">Reverse</label></td><td><input id="reverse" type="checkbox" checked></td></tr>
          <tr class="mint"><td>Coolant fan DC corr.</td><td>0 %</td></tr>
        </table></div>
      </article>

      <article class="win w-airflow">
        <header><svg><use href="#i-table"/></svg><h2>Airflow - Active state air flow [%]</h2></header>
        <div class="toolbar"><button aria-label="Open"><svg><use href="#i-folder"/></svg></button><button aria-label="Save"><svg><use href="#i-save"/></svg></button><span class="sep"></span><button aria-label="Map"><svg><use href="#i-map"/></svg></button><button aria-label="Surface"><svg><use href="#i-surface"/></svg></button><button aria-label="Split columns"><svg><use href="#i-cols"/></svg></button><button aria-label="Split rows"><svg><use href="#i-rows"/></svg></button><span class="sep"></span><button aria-label="Cursor"><svg><use href="#i-mapcross"/></svg></button><button aria-label="Follow"><svg><use href="#i-maparrows"/></svg></button><span class="sep"></span><button aria-label="Help"><svg><use href="#i-help"/></svg></button></div>
        <div class="split">
          <div class="map-pane">
            <div class="map-wrap">
              <table class="map">
                <tr class="first"><td class="r">99.0</td><td class="o">83.0</td><td class="y">64.0</td><td class="l">50.0</td><td class="l">50.0</td><td class="g">30.0</td><td class="g">30.0</td><td class="h">40.0</td><th>1600</th></tr>
                <tr><td class="r">99.0</td><td class="o">83.0</td><td class="y">64.0</td><td class="l">50.0</td><td class="l">50.0</td><td class="g">30.0</td><td class="g">30.0</td><td class="h">40.0</td><th>1400</th></tr>
                <tr><td class="r">99.0</td><td class="o">83.0</td><td class="y">64.0</td><td class="l">50.0</td><td class="l">50.0</td><td class="g">30.0</td><td class="g">30.0</td><td class="h">40.0</td><th>1200</th></tr>
                <tr><td class="r">99.0</td><td class="o">83.0</td><td class="y">64.0</td><td class="l">50.0</td><td class="l">50.0</td><td class="g">30.0</td><td class="g">30.0</td><td class="h">40.0</td><th>1000</th></tr>
                <tr><td class="r">99.0</td><td class="o">83.0</td><td class="y">64.0</td><td class="l">50.0</td><td class="l">50.0</td><td class="g">30.0</td><td class="g">30.0</td><td class="h">40.0</td><th>800</th></tr>
                <tr><th>-31</th><th>5</th><th>41</th><th>77</th><th>113</th><th>149</th><th>185</th><th>221</th><th></th></tr>
              </table>
              <i class="cursor-h"></i><i class="cursor-v"></i>
            </div>
            <div class="y-name"><span>Idle target (RPM)</span></div>
            <div class="x-name">Coolant Temp. (°F)</div>
          </div>
          <div class="plot3d">
            <svg viewBox="943 249 601 933" preserveAspectRatio="none">
              <path fill="#ffaaaa" d="M1119 310L1544 320V1117L1100 1111V610z"/>
              <g class="lines"><path d="M1119 310L1211 311 1211 313 1371 314 1371 316 1530 317 1530 319H1544M1100 610L1544 619M1119 610V811H1258M1119 811L1101 1110M1100 610V1110L1544 1117"/></g>
              <path fill="url(#g-surface)" d="M1119 310L1199 429 1277 565 1357 669 1437 670 1516 817H1560V1116H1497L1418 970H1339L1258 865 1180 722 1100 610z"/>
              <g class="lines"><path d="M1119 310L1199 429 1277 565 1357 669 1437 670 1516 817H1560M1114 385L1194 502 1272 640 1352 745H1432L1511 892H1555M1109 460L1189 577 1267 715 1348 820H1427L1506 967H1555M1105 535L1185 650 1262 790 1343 895H1423L1502 1042H1555M1100 610L1180 722 1258 865 1339 970H1418L1497 1116H1555M1119 310L1100 610M1199 429L1180 722M1277 565L1258 865M1357 669L1339 970M1437 670L1418 970M1516 817L1497 1116M1180 612L1310 614"/></g>
              <path d="M1100 1122L1544 1131" stroke="#f00" stroke-width="6"/>
              <path fill="#fff" d="M1090 595h19v28h-19z"/><path d="M1100 560V608" stroke="#ff0" stroke-width="3"/><path fill="#ff0" d="M1096 552h9v14h-9z"/>
            </svg>
            <span class="val">Value: 99.0</span><span class="ax">Coolant</span>
          </div>
        </div>
      </article>

      <article class="win active w-idle">
        <header><svg><use href="#i-doc"/></svg><h2>Idle</h2><div class="caption"><button aria-label="Minimize"><svg><use href="#i-min"/></svg></button><button aria-label="Maximize"><svg><use href="#i-max"/></svg></button><button class="red" aria-label="Close"><svg><use href="#i-close"/></svg></button></div></header>
        <div class="log-body"><table class="log">
          <thead><tr><th class="n">Name</th><th class="v">Value</th><th class="u">Unit</th></tr></thead>
          <tbody>
          <tr class="l1"><td>Idle control active</td><td>YES</td><td></td></tr>
          <tr class="l2"><td>Idle state</td><td>Active</td><td></td></tr>
          <tr class="l3"><td>Idle target</td><td>1450</td><td>rpm</td></tr>
          <tr class="l4"><td>RPM</td><td>652</td><td>rpm</td></tr>
          <tr class="l3"><td>Idle ramp down offset</td><td>0</td><td>RPM</td></tr>
          <tr class="l5"><td>Idle effective DC</td><td>0.00</td><td>%</td></tr>
          <tr class="l6"><td>Idle air %</td><td>0.00</td><td>%</td></tr>
          <tr class="l7"><td>Idle motor step</td><td>0</td><td>step</td></tr>
          <tr class="l6"><td>Idle PID air % correction</td><td>0.00</td><td></td></tr>
          <tr class="lime-d"><td>Idle airflow custom corr.</td><td>0</td><td></td></tr>
          <tr class="lime"><td>Idle airflow custom corr. active</td><td>NO</td><td></td></tr>
          <tr class="l8"><td>Idle ignition target</td><td>15.00</td><td>°BT...</td></tr>
          <tr class="cream"><td>Idle PID ign. correction</td><td>0.00</td><td>°</td></tr>
          <tr class="l8"><td>Idle cut percent</td><td>0</td><td>%</td></tr>
          <tr class="pink"><td>Idle force open loop</td><td>NO</td><td></td></tr>
          </tbody>
        </table></div>
      </article>
    </div>
    <div class="mdi-scroll"><i></i></div>
  </section>

  <aside class="help">
    <div class="help-tools">
      <button aria-label="Detach"><svg viewBox="0 0 24 24"><path d="M2 21L18 6" stroke="#000" stroke-width="3"/><path d="M11 4h9v9" fill="none" stroke="#222" stroke-width="2"/></svg></button>
      <button aria-label="Back"><svg viewBox="0 0 24 24"><path d="M0 12L10 2v5h14v10H10v5z" fill="url(#g-back)"/></svg></button>
      <button aria-label="Forward"><svg viewBox="0 0 24 24"><path d="M24 12L14 2v5H0v10h14v5z" fill="#c8c8c8"/></svg></button>
    </div>
    <div class="help-body">
      <p class="crumbs"><a href="#idle">Idle</a> <a href="#airflow">Airflow</a></p>
      <h2>Override</h2>
      <hr>
      <p>If we want to test different <b><i>Airflow %</i></b> values regardless of the current state of the idle controller (for example, if we want to test a PWM valve or a stepper motor), we can activate this option.</p>
      <p class="note">Note! In the case of an electronic throttle, throttle control is unconditionally taken over by the idle controller, so this function should not be activated when the vehicle is in motion!</p>
      <p class="note">For PWM-controlled solenoids, an Airflow % value of 0 means that the Duty Cycle (DC) will be equal to the Solenoid minimum DC, and a value of 100% means that the DC will be equal to the Solenoid maximum DC.</p>
      <table>
        <thead><tr><th class="hn">Name</th><th>Description</th></tr></thead>
        <tbody>
        <tr><td>Override airflow %</td><td>Override the idle air controller with constant Airflow %<br>defined by <b><i>Airflow DC</i></b> value</td></tr>
        <tr><td>Airflow %</td><td>When the <b><i>Override airflow %</i></b> option is selected, this value defines the airflow % independently of the current state of the idle controller.</td></tr>
        </tbody>
      </table>
    </div>
  </aside>
</main>

<footer class="status">
  <span class="on conn">CONNECTED</span><span class="on sync">IS: SYNCHRONISED</span><span class="plain state">STATE:RUNNING</span><span class="on can">CAN Bus</span><span class="w47">TERR</span><span class="w35">CEL</span><span class="w35">EP</span><span class="w47">LC</span><span class="w29">FC</span><span class="w29">SC</span><span class="w58">ALS#1</span><span class="w29">GC</span><span class="w29">KS</span><span class="w35">RAL</span><span class="on dim w32">IDL</span><span class="on dim w29">FP</span><span class="on dim w29">CF</span><span class="on dim w23">F1</span><span class="w23">F2</span><span class="w23">F3</span><span class="w23">F4</span><span class="w23">F5</span><span class="w23">F6</span><span class="w23">F7</span><span class="w23">F8</span><span class="w23">F9</span><span class="w32">F10</span><span class="w32">F11</span><span class="w32">F12</span><span class="on dim w29">AC</span><span class="off w29">CL</span><span class="off w29">SL</span><span class="info">T: 87.8 °F</span><span class="info">FV: 3.00</span>
</footer>

<section class="osk" aria-label="On-Screen Keyboard">
  <header>
    <svg viewBox="0 0 24 24" aria-hidden="true"><path d="M2 6h21v17H2z" fill="#50585f"/><path d="M2 21h21v2H2z" fill="#8a9298"/><rect width="19" height="13" rx="1" fill="#1cb8d8"/><path d="M2 3h15M4 6h11" stroke="#fff" stroke-width="1.800" stroke-dasharray="2 1.500"/><path d="M4 10h11" stroke="#fff" stroke-width="1.600"/></svg>
    <h2>On-Screen Keyboard</h2>
    <button aria-label="Minimize"><svg viewBox="0 0 16 16"><path d="M0 8h16" stroke="#777" stroke-width="1.200"/></svg></button>
    <button aria-label="Maximize"><svg viewBox="0 0 16 16"><rect x="1" y="1" width="14" height="14" fill="none" stroke="#ddd" stroke-width="1.500"/></svg></button>
  </header>
  <div class="keys">
    <div class="block main-keys">
      <div class="krow"><button>Esc</button><button class="two"><s>~</s><b>`</b></button><button class="two"><s>!</s><b>1</b></button><button class="two"><s>@</s><b>2</b></button><button class="two"><s>#</s><b>3</b></button><button class="two"><s>$</s><b>4</b></button><button class="two"><s>%</s><b>5</b></button><button class="two"><s>^</s><b>6</b></button><button class="two"><s>&amp;</s><b>7</b></button><button class="two"><s>*</s><b>8</b></button><button class="two"><s>(</s><b>9</b></button><button class="two"><s>)</s><b>0</b></button><button class="two"><s>_</s><b>-</b></button><button class="two"><s>+</s><b>=</b></button><button class="grow" aria-label="Backspace"><svg viewBox="0 0 24 18" class="bksp"><path d="M8 1h15v16H8L1 9zM12 5l7 8M19 5l-7 8" fill="none" stroke="#fff" stroke-width="1.500"/></svg></button></div>
      <div class="krow"><button class="k-tab">Tab</button><button>q</button><button>w</button><button>e</button><button>r</button><button>t</button><button>y</button><button>u</button><button>i</button><button>o</button><button>p</button><button class="two"><s>{</s><b>[</b></button><button class="two"><s>}</s><b>]</b></button><button class="two"><s>|</s><b>\</b></button><button class="grow">Del</button></div>
      <div class="krow"><button class="k-caps">Caps</button><button>a</button><button>s</button><button>d</button><button>f</button><button>g</button><button>h</button><button>j</button><button>k</button><button>l</button><button class="two"><s>:</s><b>;</b></button><button class="two"><s>"</s><b>'</b></button><button class="grow">Enter</button></div>
      <div class="krow"><button class="k-shift">Shift</button><button>z</button><button>x</button><button>c</button><button>v</button><button>b</button><button>n</button><button>m</button><button class="two"><s>&lt;</s><b>,</b></button><button class="two"><s>&gt;</s><b>.</b></button><button class="two"><s>?</s><b>/</b></button><button aria-label="Up"><svg viewBox="0 0 28 28"><path d="M2 17L14 4l12 13" fill="none" stroke="#fff" stroke-width="1.600"/></svg></button><button class="grow">Shift</button></div>
      <div class="krow"><button>Fn</button><button class="small">Ctrl</button><button class="mid" aria-label="Windows"><svg viewBox="0 0 14 14"><path d="M0 2l6-1v5H0zM7 1l7-1v6H7zM0 7h6v6l-6-1zM7 7h7v7l-7-1z" fill="#fff"/></svg></button><button>Alt</button><button class="grow" aria-label="Space"></button><button>Alt</button><button class="small">Ctrl</button><button aria-label="Left"><svg viewBox="0 0 28 28"><path d="M14 2L2 14l12 12" fill="none" stroke="#fff" stroke-width="1.600"/></svg></button><button aria-label="Down"><svg viewBox="0 0 28 28"><path d="M2 3l12 12L26 3" fill="none" stroke="#fff" stroke-width="1.600"/></svg></button><button aria-label="Right"><svg viewBox="0 0 28 28"><path d="M2 2l12 12L2 26" fill="none" stroke="#fff" stroke-width="1.600"/></svg></button><button class="k-menu mid" aria-label="Menu"><svg viewBox="0 0 14 14"><path d="M2 1h10v12H2zM2 4h10M5 7h5M5 10h5" fill="none" stroke="#fff" stroke-width="1.400"/></svg></button></div>
    </div>
    <div class="block nav-keys">
      <div class="krow"><button>Home</button><button>PgUp</button><button>Nav</button></div>
      <div class="krow"><button>End</button><button>PgDn</button><button>Mv Up</button></div>
      <div class="krow"><button>Insert</button><button>Pause</button><button>Mv Dn</button></div>
      <div class="krow"><button>PrtScn</button><button>ScrLk</button><button>Dock</button></div>
      <div class="krow last"><button class="small">Options</button><button>Help</button><button>Fade</button></div>
    </div>
  </div>
</section>
</body>
</html>
```
FILE: styles.css
```css
* { box-sizing: border-box; }
body {
  margin: 0;
  height: 100vh;
  display: flex;
  flex-direction: column;
  overflow: hidden;
  position: relative;
  background: #f0f0f0;
  color: #000;
  font: 17px/24px "Open Sans", "Noto Sans", sans-serif;
}
button { font: inherit; color: inherit; background: none; border: 0; padding: 0; margin: 0; }
h1, h2, p, ul { margin: 0; padding: 0; font-size: inherit; font-weight: 400; }
table { border-collapse: separate; border-spacing: 0; }
.defs { position: absolute; width: 0; height: 0; }

/* Title bar and menu */
.titlebar { display: flex; align-items: center; height: 29px; background: #eef3fb; flex: none; }
.app-icon { width: 23px; height: 24px; margin-right: 8px; }
.app-title { flex: 1; line-height: 24px; padding-bottom: 4px; }
.sys-buttons { display: flex; }
.sys-buttons button { width: 70px; height: 24px; }
.sys-buttons svg { width: 15px; height: 15px; display: block; margin: 2px auto; }
.menu { display: flex; gap: 21px; height: 28px; padding-left: 8px; background: #fff; flex: none; }
.menu button { line-height: 32px; height: 28px; }

/* Icon bars */
.toolbar { display: flex; align-items: center; gap: 7px; height: 33px; background: #f0f0f0; flex: none; }
.toolbar button, .toolbar svg { width: 24px; height: 24px; display: block; }
.toolbar .sep { width: 1px; height: 26px; background: #888; }
.toolbar .blue { color: #1c86dc; }

.workspace { flex: 1; display: flex; min-height: 0; }

/* Tree */
.sidebar { width: 182px; flex: none; display: flex; flex-direction: column; border-right: 5px solid #fff; }
.search { width: 100%; height: 25px; border: 0; border-bottom: 1px solid #888; background: #fff; padding: 0; }
.tree-area { flex: 1; display: flex; min-height: 0; }
.tree { width: 152px; background: #fff; list-style: none; overflow: hidden; padding-top: 1px; }
.tree li { display: flex; align-items: center; height: 30px; font-size: 19px; white-space: nowrap; overflow: hidden; }
.tree svg { width: 23px; height: 23px; flex: none; margin-right: 6px; }
.tree .chev { width: 12px; height: 12px; margin: 0 10px 0 6px; }
.tree span { padding-top: 1px; }
.tree .top { font-size: 18px; font-weight: 700; }
.tree .group { padding-left: 26px; }
.tree .leaf1 { padding-left: 54px; }
.tree .leaf2 { padding-left: 81px; }
.tree .selected { background: #d9d9d9; }
.vscroll { flex: 1; padding: 26px 0 0 10px; }
.vscroll i { display: block; width: 5px; height: 92%; border-radius: 3px; background: #858585; }
.hscroll { height: 26px; padding: 10px 0 0 23px; }
.hscroll i { display: block; width: 46px; height: 5px; border-radius: 3px; background: #858585; }

/* Desktop area */
.mdi { flex: 1; min-width: 0; display: flex; flex-direction: column; }
.tabs { display: flex; height: 27px; overflow: hidden; background: linear-gradient(#4d6390 45%, #364d6e 45%); flex: none; font: 18px/27px "Liberation Sans", Arial, sans-serif; color: #fff; }
.tabs button { width: 126px; flex: none; }
.tabs .active { background: linear-gradient(#ffd080 45%, #ffbc5c 45%); color: #000; }
.canvas { flex: 1; position: relative; overflow: hidden; background: #ababab; border-left: 2px solid #696969; border-top: 2px solid #777; }
.mdi-scroll { height: 30px; padding: 12px 0 0 26px; background: #f0f0f0; border-left: 2px solid #696969; }
.mdi-scroll i { display: block; height: 5px; border-radius: 3px; background: #858585; }

/* Windows */
.win {
  position: absolute;
  display: flex;
  flex-direction: column;
  padding: 0 12px 10px 11px;
  border: 1px solid #45484d;
  border-radius: 8px 8px 0 0;
  background: linear-gradient(#bccadb, #d7e4f2 46px);
  box-shadow: inset 1px 1px 0 #eef4fb;
}
.win > header { display: flex; align-items: center; height: 45px; flex: none; border-bottom: 1px solid #999; padding-top: 7px; }
.win > header > svg { width: 23px; height: 23px; margin-left: 1px; }
.win h2 { flex: 1; padding: 2px 0 0 5px; color: #8f979f; }
.caption { display: flex; gap: 2px; }
.caption button { width: 50px; height: 29px; border: 1px solid #7d92b0; border-radius: 3px; box-shadow: inset 0 0 0 1px #d5e2f0; }
.caption svg { width: 24px; height: 24px; display: block; margin: 1px auto; }
.win .toolbar { padding: 0 0 1px 2px; }
.win.active { background: linear-gradient(#98b2d1, #b9d1ea 46px); border-color: #000; box-shadow: inset 0 0 0 1px #4fc3de; }
.active h2 { color: #000; }
.active .caption button { border-color: #4d6488; background: linear-gradient(#b6cae2 45%, #8fabcd 45%); }
.active .caption .red { border-color: #4b1018; background: linear-gradient(#dc8f83 45%, #b8402a 45%); box-shadow: inset 0 0 0 1px #e0988c; }

.w-activation { left: 0; top: 0; width: 562px; height: 449px; }
.w-params { left: 568px; top: 0; width: 562px; height: 449px; }
.w-rpm { left: 1136px; top: 0; width: 788px; height: 499px; padding: 0 10px 3px; }
.w-pid { left: 0; top: 448px; width: 562px; height: 314px; }
.w-actuator { left: 568px; top: 448px; width: 562px; height: 587px; }
.w-airflow { left: 1136px; top: 496px; width: 1100px; height: 400px; padding: 0 10px; }
.w-idle { left: 0; top: 761px; width: 457px; height: 524px; padding: 0 10px 10px; }
.w-rpm .caption, .w-idle .caption { margin-right: 3px; }

.sheet { flex: 1; min-height: 0; background: #fff; border-left: 2px solid #777; border-top: 2px solid #777; border-bottom: 1px solid #e8e8e8; overflow: hidden; }
.params { width: 100%; table-layout: fixed; }
.params tr { height: 34px; }
.params th { height: 33px; padding: 0 4px; text-align: left; background: #c8c8c8; color: #808080; font-weight: 700; }
.params td { height: 34px; padding: 0 0 0 4px; border-bottom: 1px solid #c8c8c8; white-space: nowrap; overflow: hidden; }
.params td + td { border-left: 1px solid #c8c8c8; }
.params input { appearance: none; display: block; width: 25px; height: 25px; margin: 0; border: 1px solid #000; background: transparent; }
.params input:checked { background: #fff; }
.params input:checked::after { content: "✔"; display: block; text-align: center; font: 14px/22px "DejaVu Sans", sans-serif; }

.lime { background: #e6ff9c; }
.lime-d { background: #d5e991; }
.peach { background: #ffebe2; }
.peach-d { background: #e9dad0; }
.mint { background: #e8ffe0; }
.mint-d { background: #d5e8cf; }
.sky { background: #e0f7ff; }
.sky-d { background: #cfe2e9; }
.cream { background: #ffffe2; }
.pink { background: #fce0fa; }

/* Idle log list */
.log-body { flex: 1; min-height: 0; background: #fff; border: 1px solid #a8b4c4; border-top: 0; padding-left: 5px; }
.log { width: 100%; table-layout: fixed; }
.log th { height: 32px; padding: 0 0 0 7px; text-align: left; font-weight: 400; border-right: 1px solid #ddd; }
.log td { height: 29px; padding: 0 0 0 7px; white-space: nowrap; }
.log th:first-child, .log td:first-child { padding-left: 2px; }
.log .v { width: 100px; }
.log .u { width: 61px; }
.l1 { background: #ffe2d8; }
.l2 { background: #e9cfc6; }
.l3 { background: #caffca; }
.l4 { background: #b9e9b9; }
.l5 { background: #e7cee6; }
.l6 { background: #e0e5ff; }
.l7 { background: #ced3e8; }
.l8 { background: #e7e7cf; }

/* RPM chart */
.chart { display: block; width: 100%; height: 357px; background: #fff; flex: none; font: 25px "Liberation Sans", Arial, sans-serif; }
.chart .grid { stroke: #c0c0c0; stroke-dasharray: 4 3; fill: none; }
.chart .area { fill: #f00; }
.chart .curve { fill: none; stroke: #000; stroke-width: 1; }
.chart .axis { fill: none; stroke: #000; stroke-width: 2; }
.chart .tick { stroke: #000; stroke-width: 1; }
.dots circle { fill: #777; stroke: #000; }
.dots .hot { fill: #ff0; }
.ylab { text-anchor: end; }
.xlab { text-anchor: middle; }
.rpm-strip { background: #f0f0f0; padding-top: 4px; }
.rpm-strip table { width: 100%; table-layout: fixed; background: #ccc; border-left: 1px solid #999; border-top: 1px solid #999; }
.rpm-strip td { padding: 0; text-align: center; border-right: 1px solid #999; border-bottom: 2px solid #999; }
.rpm-strip .unit { width: 67px; }
.vals td { height: 24px; line-height: 22px; }
.bins td { height: 28px; font-size: 16px; }
.rpm-strip .a { background: #d7ff80; }
.rpm-strip .b { background: #cdff80; }
.rpm-strip .c { background: #c4ff80; }
.rpm-strip .mark { border-right: 3px solid #fff; box-shadow: inset -2px 0 0 #f00; }

/* Airflow map */
.split { display: flex; height: 311px; }
.map-pane { width: 496px; flex: none; display: grid; grid-template: 267px 1fr / 457px 1fr; background: #a9a9a9; border-right: 4px solid #e8e8e8; font-size: 15px; }
.map-wrap { position: relative; }
.map { width: 457px; table-layout: fixed; border-left: 1px solid #999; }
.map td, .map th { height: 45px; padding: 0 0 2px; text-align: center; font-weight: 400; border-right: 1px solid #999; border-bottom: 2px solid #999; }
.map .first td, .map .first th { height: 42px; }
.map th { background: #ccc; }
.map tr th:last-child { width: 73px; }
.map .r { background: #ff8080; }
.map .o { background: #ffb980; }
.map .y { background: #ffff80; }
.map .l { background: #c8ff80; }
.map .g { background: #80ff80; }
.map .h { background: #a4ff80; }
.cursor-h { position: absolute; left: 0; top: 52px; width: 385px; height: 4px; border-top: 2px solid #f00; background: #fff; }
.cursor-v { position: absolute; left: 332px; top: 0; width: 4px; height: 221px; border-left: 2px solid #f00; background: #fff; }
.y-name { display: flex; align-items: center; justify-content: center; padding-top: 40px; }
.y-name span { writing-mode: vertical-rl; transform: rotate(180deg); font-size: 15px; }
.x-name { grid-column: 1 / 3; text-align: center; padding-top: 1px; }
.plot3d { flex: 1; position: relative; background: #808080; }
.plot3d svg { display: block; width: 330px; height: 311px; }
.plot3d .lines path { fill: none; stroke: #181818; stroke-width: 1px; vector-effect: non-scaling-stroke; }
.plot3d span { position: absolute; color: #fff; font-size: 12px; line-height: 16px; }
.plot3d .val { left: 86px; top: 91px; }
.plot3d .ax { left: 310px; top: 285px; }

/* Help pane */
.help { width: 398px; flex: none; background: #fff; font: 20px/23px "Liberation Sans", Arial, sans-serif; }
.help-tools { display: flex; gap: 7px; height: 31px; align-items: center; padding-left: 4px; background: #f0f0f0; }
.help-tools button, .help-tools svg { width: 24px; height: 24px; display: block; }
.help-body { padding: 11px 10px 0; }
.help-body h2 { font-size: 40px; font-weight: 700; line-height: 45px; }
.help-body hr { height: 1px; border: 0; background: #808080; margin: 23px -2px 24px 0; }
.help-body p { margin-bottom: 23px; padding-right: 2px; }
.help-body .crumbs { margin: 0; }
.help-body .note { color: #f00; font-weight: 700; line-height: 24px; }
.help a { color: #00e; }
.help table { width: 377px; table-layout: fixed; border-collapse: collapse; }
.help th { background: #000; color: #fff; height: 31px; padding: 0; border: 1px solid #333; }
.help .hn { width: 89px; }
.help td { border: 1px solid #000; padding: 3px; }

/* Status line */
.status { display: flex; gap: 3px; height: 18px; overflow: hidden; flex: none; background: #d0d0d0; border-top: 1px solid #999; font-weight: 700; line-height: 24px; }
.status span { flex: none; height: 20px; background: #000; color: #fff; padding-left: 1px; white-space: nowrap; overflow: hidden; }
.status .on { background: #0f0; color: #000; }
.status .dim { color: #021; }
.status .plain { background: #fff; color: #000; }
.status .off { color: #666; }
.status .info { width: 81px; background: #d0d0d0; color: #222; font-size: 16px; }
.conn { width: 135px; }
.sync { width: 167px; }
.state { width: 174px; }
.can { width: 78px; }
.w23 { width: 23px; }
.w29 { width: 29px; }
.w32 { width: 32px; }
.w35 { width: 35px; }
.w47 { width: 47px; }
.w58 { width: 58px; }

/* On-screen keyboard floats over the desktop */
.osk { position: absolute; right: 0; bottom: 0; width: 931px; height: 324px; overflow: hidden; background: #1b1b1b; border: 1px solid #999; border-width: 1px 0 0 1px; border-radius: 10px 0 0 0; color: #fff; }
.osk header { display: flex; align-items: center; height: 44px; padding-left: 12px; background: #f3f3f3; color: #888; }
.osk header > svg { width: 24px; height: 24px; }
.osk h2 { flex: 1; padding-left: 8px; }
.osk header button { width: 69px; height: 30px; }
.osk header button svg { width: 16px; height: 16px; display: block; margin: 0 auto 0 30px; }
.keys { display: flex; gap: 14px; padding: 52px 0 0 4px; font-size: 21px; }
.block { display: flex; flex-direction: column; gap: 4px; flex: none; }
.main-keys { width: 734px; }
.krow { display: flex; gap: 4px; height: 42px; }
.krow button { width: 43px; height: 42px; flex: none; background: #333; text-align: left; padding: 0 0 10px 5px; line-height: 30px; overflow: hidden; white-space: nowrap; }
.krow .grow { flex: 1; }
.krow .k-tab { width: 67px; }
.krow .k-caps { width: 91px; }
.krow .k-shift { width: 115px; }
.krow .k-menu { width: 50px; }
.krow .two { display: flex; justify-content: space-between; padding: 0 8px 0 4px; }
.krow s { text-decoration: none; color: #888; font-size: 15px; line-height: 24px; }
.krow b { font-weight: 400; font-size: 20px; line-height: 30px; align-self: flex-end; height: 32px; }
.krow .small { font-size: 18px; }
.krow svg { width: 26px; height: 26px; display: block; }
.krow .bksp { width: 25px; height: 19px; }
.krow .mid { padding: 2px 0 0 14px; }
.krow .mid svg { width: 14px; height: 14px; }
.nav-keys .krow button { width: 78px; padding-left: 4px; padding-right: 0; }
.nav-keys .last button { line-height: 26px; }
.nav-keys .last { padding-top: 4px; }
```
